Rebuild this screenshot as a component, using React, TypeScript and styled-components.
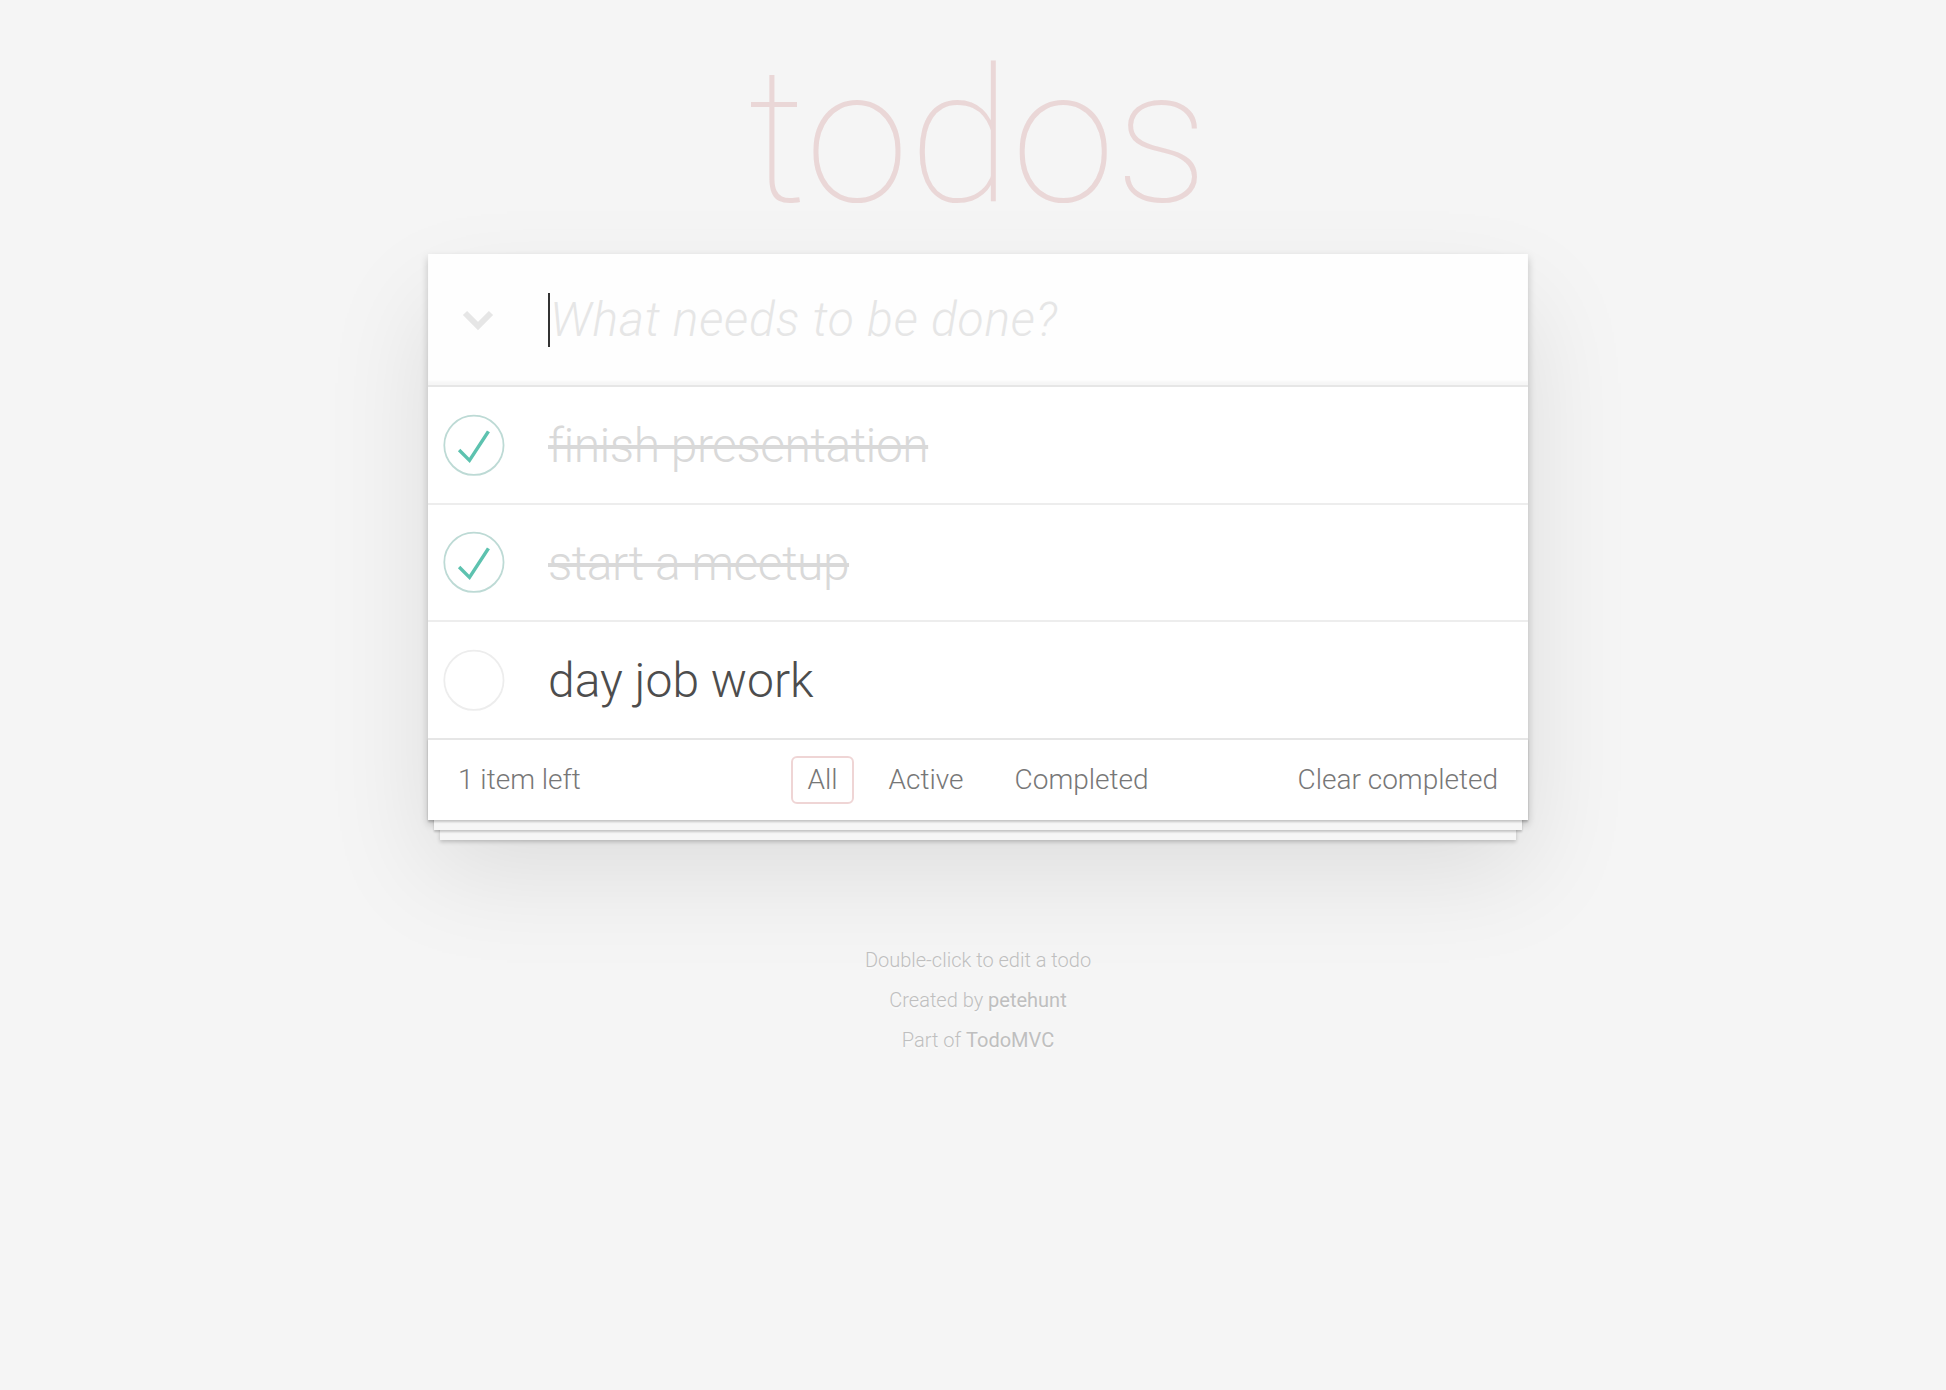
import React from 'react';
import styled, { createGlobalStyle } from 'styled-components';

const GlobalStyle = createGlobalStyle`
  html, body {
    margin: 0;
    padding: 0;
    background: #f5f5f5;
  }
  body {
    font-family: Roboto, 'Helvetica Neue', 'Liberation Sans', sans-serif;
    font-weight: 300;
    color: #4d4d4d;
    -webkit-font-smoothing: antialiased;
  }
`;

//Styled Components

const Page = styled.div`
  width: 1100px;
  margin: 0 auto;
  padding-left: 10px;
`;

const Title = styled.h1`
  margin: 0 0 17px;
  padding-top: 37px;
  font-size: 188px;
  line-height: 200px;
  font-weight: 100;
  text-align: center;
  color: rgba(175, 47, 47, 0.15);
`;

const TodoApp = styled.section`
  background: #fff;
  box-shadow: 0 4px 8px 0 rgba(0, 0, 0, 0.2), 0 50px 100px 0 rgba(0, 0, 0, 0.1);
`;

const Header = styled.header`
  display: flex;
  align-items: center;
  height: 131px;
  background: rgba(0, 0, 0, 0.003);
  box-shadow: inset 0 -4px 2px rgba(0, 0, 0, 0.03);
`;

const ToggleAll = styled.div`
  width: 100px;
  display: flex;
  justify-content: center;
  align-items: center;
`;

const NewTodo = styled.div`
  display: flex;
  align-items: center;
  margin-left: 20px;
  font-size: 48px;
  line-height: 1.4;
`;

const Caret = styled.span`
  width: 2px;
  height: 54px;
  background: #333;
`;

const Placeholder = styled.span`
  font-style: italic;
  font-weight: 300;
  letter-spacing: 0.8px;
  color: #e6e6e6;
`;

const Main = styled.section`
  border-top: 2px solid #e6e6e6;
`;

const TodoList = styled.ul`
  list-style: none;
  margin: 0;
  padding: 0;
`;

const TodoItem = styled.li`
  display: flex;
  align-items: center;
  font-size: 48px;
  border-bottom: 2px solid #ededed;
  &:last-child {
    border-bottom: none;
  }
`;

const Toggle = styled.svg`
  flex: none;
  width: 80px;
  height: 80px;
`;

const Label = styled.label<{ $done: boolean }>`
  display: block;
  padding: 30px 120px 28px 40px;
  line-height: 1.2;
  color: ${(p) => (p.$done ? '#d9d9d9' : '#4d4d4d')};
  text-decoration: ${(p) => (p.$done ? 'line-through' : 'none')};
  letter-spacing: ${(p) => (p.$done ? '-0.5px' : '0')};
`;

const Footer = styled.footer`
  display: grid;
  grid-template-columns: 1fr auto 1fr;
  grid-template-rows: 40px;
  align-items: center;
  height: 40px;
  padding: 20px 30px;
  border-top: 2px solid #e6e6e6;
  background: #fff;
  color: #777;
  font-size: 28px;
  line-height: 40px;
  box-shadow: 0 2px 2px rgba(0, 0, 0, 0.2), 0 16px 0 -6px #f6f6f6,
    0 18px 2px -6px rgba(0, 0, 0, 0.2), 0 32px 0 -12px #f6f6f6,
    0 34px 4px -12px rgba(0, 0, 0, 0.2);
`;

const TodoCount = styled.span`
  justify-self: start;
`;

const Filters = styled.ul`
  display: flex;
  gap: 7px;
  list-style: none;
  margin: 0;
  padding: 0;
`;

const FilterLink = styled.a<{ $selected?: boolean }>`
  display: inline-block;
  margin: 6px;
  padding: 6px 14px;
  line-height: 32px;
  color: inherit;
  text-decoration: none;
  border: 2px solid
    ${(p) => (p.$selected ? 'rgba(175, 47, 47, 0.2)' : 'transparent')};
  border-radius: 6px;
`;

const ClearCompleted = styled.button`
  justify-self: end;
  padding: 0;
  border: none;
  background: none;
  font: inherit;
  color: inherit;
  cursor: pointer;
`;

const Info = styled.footer`
  margin: 130px auto 0;
  color: #bfbfbf;
  font-size: 20px;
  text-align: center;
  text-shadow: 0 2px 0 rgba(255, 255, 255, 0.5);
  p {
    margin: 20px 0;
    line-height: 1;
  }
  a {
    color: inherit;
    font-weight: 400;
    text-decoration: none;
  }
`;

type Todo = { title: string; completed: boolean };

const todos: Todo[] = [
  { title: 'finish presentation', completed: true },
  { title: 'start a meetup', completed: true },
  { title: 'day job work', completed: false },
];

const Checkbox = ({ checked }: { checked: boolean }) => (
  <Toggle viewBox='-10 -18 100 135'>
    <circle
      cx='50'
      cy='50'
      r='50'
      fill='none'
      stroke={checked ? '#bddad5' : '#ededed'}
      strokeWidth='3'
    />
    {checked && (
      <path fill='#5dc2af' d='M72 25L42 71 27 56l-4 4 20 20 34-52z' />
    )}
  </Toggle>
);

const App: React.FC = () => {
  const left = todos.filter((t) => !t.completed).length;
  return (
    <Page>
      <GlobalStyle />
      <Title>todos</Title>
      <TodoApp>
        <Header>
          <ToggleAll>
            <svg width='32' height='22' viewBox='0 0 32 22'>
              <polyline
                points='3,4 16,17 29,4'
                fill='none'
                stroke='#e6e6e6'
                strokeWidth='6'
              />
            </svg>
          </ToggleAll>
          <NewTodo>
            <Caret />
            <Placeholder>What needs to be done?</Placeholder>
          </NewTodo>
        </Header>
        <Main>
          <TodoList>
            {todos.map((todo, index) => (
              <TodoItem key={index}>
                <Checkbox checked={todo.completed} />
                <Label $done={todo.completed}>{todo.title}</Label>
              </TodoItem>
            ))}
          </TodoList>
        </Main>
        <Footer>
          <TodoCount>
            {left} item{left === 1 ? '' : 's'} left
          </TodoCount>
          <Filters>
            <li>
              <FilterLink href='#/' $selected>
                All
              </FilterLink>
            </li>
            <li>
              <FilterLink href='#/active'>Active</FilterLink>
            </li>
            <li>
              <FilterLink href='#/completed'>Completed</FilterLink>
            </li>
          </Filters>
          <ClearCompleted>Clear completed</ClearCompleted>
        </Footer>
      </TodoApp>
      <Info>
        <p>Double-click to edit a todo</p>
        <p>
          Created by <a href='#'>petehunt</a>
        </p>
        <p>
          Part of <a href='#'>TodoMVC</a>
        </p>
      </Info>
    </Page>
  );
};

export default App;
